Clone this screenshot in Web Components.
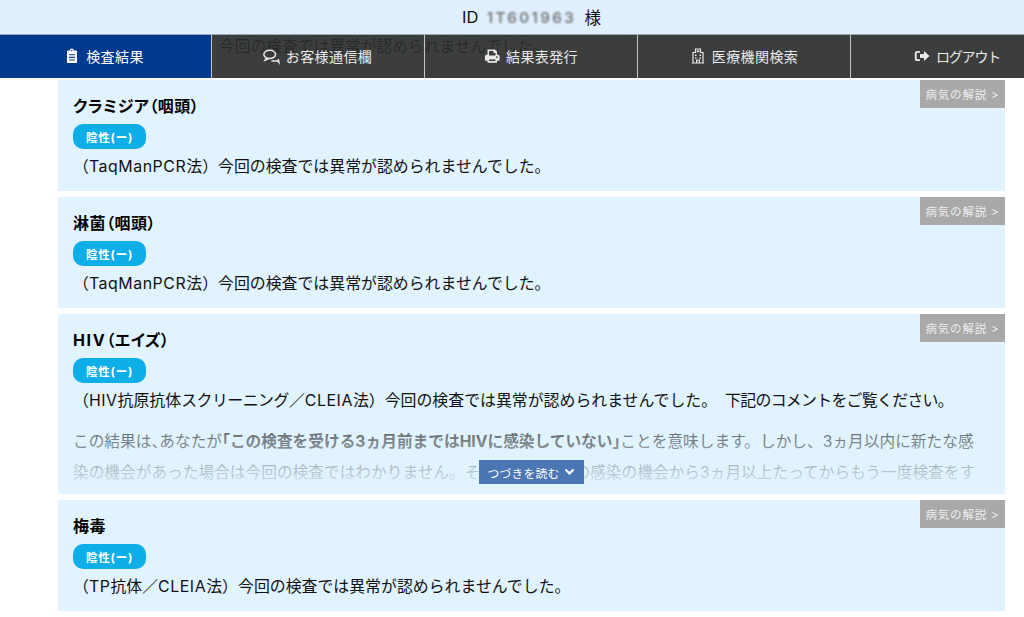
<!DOCTYPE html>
<html lang="ja">
<head>
<meta charset="utf-8">
<title>検査結果</title>
<style>
html, body { margin: 0; padding: 0; height: 617px; overflow: hidden; background: #fff; }
body { font-family: Inter, "Noto Sans CJK JP", sans-serif; color: #111; }
.tight { font-feature-settings: "halt"; }
.la { letter-spacing: .55px; }
.wide { letter-spacing: 1.6px; }
.kana { letter-spacing: -.5px; }
.note { letter-spacing: -.7px; }
</style>
</head>
<body>
<site-header user="1T601963"></site-header>
<result-list>
    <div slot="behind">今回の検査では異常が認められませんでした。</div>
    <result-card>
        <span slot="heading">クラミジア（咽頭）</span>
        <span slot="method">（<span class="la">TaqManPCR</span>法）今回の検査では異常が認められませんでした。</span>
    </result-card>
    <result-card>
        <span slot="heading">淋菌（咽頭）</span>
        <span slot="method">（<span class="la">TaqManPCR</span>法）今回の検査では異常が認められませんでした。</span>
    </result-card>
    <result-card>
        <span slot="heading"><span class="wide">HIV</span>（エイズ）</span>
        <span slot="method">（<span class="la">HIV</span>抗原抗体<span class="kana">スクリーニング</span>／<span class="la">CLEIA</span>法）今回の検査では異常が認められませんでした。&ensp;<span class="note">下記のコメントをご覧ください。</span></span>
        <read-more>この結果は<span class="tight">、</span>あなたが<b><span class="tight">「</span>この検査を受ける3ヵ月前まではHIVに感染していない<span class="tight">」</span></b>ことを意味します。しかし、3ヵ月以内に新たな感<br>染の機会があった場合は今回の検査ではわかりません。その場合は、その感染の機会から3ヵ月以上たってからもう一度検査をす</read-more>
    </result-card>
    <result-card>
        <span slot="heading">梅毒</span>
        <span slot="method">（<span class="la">TP</span>抗体／<span class="la">CLEIA</span>法）今回の検査では異常が認められませんでした。</span>
    </result-card>
</result-list>

<script>
'use strict'

const ICONS = {
    clipboard: '<path fill="currentColor" d="M4 2.500h1.800a2 2 0 0 1 4 0H12a1 1 0 0 1 1 1V14a1 1 0 0 1-1 1H4a1 1 0 0 1-1-1V3.500a1 1 0 0 1 1-1zm3.800-.8a.8.8 0 1 0 0 1.600.8.8 0 0 0 0-1.600zM5 6.200v1.100h6V6.200zm0 2.600v1.100h6V8.800zm0 2.600v1.100h6v-1.100z"/>',
    chat: '<g transform="translate(-1.500 0)" fill="none" stroke="currentColor" stroke-width="1.500"><ellipse cx="7.200" cy="6.400" rx="5.800" ry="4.100"/><path d="M3.800 10 2.600 12.200l3.400-1.400"/><path d="M9 13h6.200l1.200 1.400-.6-3.400"/></g>',
    print: '<path fill="currentColor" d="M3.500 1.500h7.500l2 2v3.200h1a1.800 1.800 0 0 1 1.600 1.800v3.600a.7.7 0 0 1-.7.700H13v2H3.500v-2H1.600a.7.7 0 0 1-.7-.7V8.500a1.800 1.800 0 0 1 1.600-1.800h1zm1.500 1.500v4.400h6.500V5H9.500V3zm0 8.500V13h6.500v-1.500zM12.800 8.200a.9.9 0 1 0 0 1.800.9.9 0 0 0 0-1.800z"/>',
    hospital: '<path fill="none" stroke="currentColor" stroke-width="1.200" d="M3 15V4.500h2.500V1h5v3.500H13V15zM1.800 15h12.400M6.600 15v-3h2.800v3"/><path fill="currentColor" d="M7.500 1.800h1v.9h.9v1h-.9v.9h-1v-.9h-.9v-1h.9zM5 6.500h1.500V8H5zm4.500 0H11V8H9.500zM5 9.200h1.500v1.500H5zm4.500 0H11v1.500H9.500z"/>',
    signout: '<path fill="currentColor" d="M6 3v1.800H3.700c-.6 0-1 .4-1 1v4.400c0 .6.4 1 1 1H6V13H3.400A2.600 2.600 0 0 1 .8 10.400V5.600A2.600 2.600 0 0 1 3.400 3zM10 2.900l5.500 5.100-5.500 5.100v-3H6V5.900h4z"/>'
};

class SiteHeader extends HTMLElement {

    constructor() {
        super();

        const shadow = this.attachShadow({mode: 'open'});
        const user = this.getAttribute('user');

        shadow.innerHTML = `
            <style>
            :host {
                display: block;
                position: absolute;
                top: 0;
                left: 0;
                width: 1024px;
                overflow: hidden;
                z-index: 10;
            }
            .id {
                height: 34px;
                box-sizing: border-box;
                padding-left: 39px;
                background-color: #e0f0fe;
                display: flex;
                align-items: center;
                justify-content: center;
                gap: 7px;
                font-size: 16.500px;
                color: #111;
            }
            .id span {
                color: #777;
                filter: blur(1.300px);
                width: 92px;
                font-size: 15px;
                letter-spacing: 2.400px;
                font-weight: 600;
                text-align: center;
                white-space: nowrap;
            }
            nav {
                display: flex;
                width: 1065px;
                height: 43px;
                border-top: 1px solid #9aa6b4;
            }
            </style>
            <div class="id">ID <span>${user}</span> 様</div>
            <nav>
                <nav-item icon="clipboard" active>検査結果</nav-item>
                <nav-item icon="chat">お客様通信欄</nav-item>
                <nav-item icon="print">結果表発行</nav-item>
                <nav-item icon="hospital">医療機関検索</nav-item>
                <nav-item icon="signout" narrow>ログアウト</nav-item>
            </nav>
        `;
    }
}

class NavItem extends HTMLElement {

    constructor() {
        super();

        const shadow = this.attachShadow({mode: 'open'});
        const icon = ICONS[this.getAttribute('icon')];

        shadow.innerHTML = `
            <style>
            :host {
                flex: 0 0 213px;
                box-sizing: border-box;
                display: flex;
                align-items: center;
                justify-content: center;
                gap: 6px;
                padding-bottom: 2px;
                color: #e8e8e8;
                background-color: rgba(43, 46, 46, .92);
                border-right: 1px solid #c4c6c6;
                font-size: 14px;
                letter-spacing: .4px;
            }
            :host([active]) {
                flex-basis: 212px;
                padding-right: 3px;
                background-color: #003a8e;
                color: #fff;
            }
            :host([narrow]) {
                letter-spacing: -1.200px;
            }
            svg {
                width: 16px;
                height: 16px;
                overflow: visible;
            }
            </style>
            <svg viewBox="0 0 16 16">${icon}</svg>
            <slot></slot>
        `;
    }
}

class ResultList extends HTMLElement {

    constructor() {
        super();

        const shadow = this.attachShadow({mode: 'open'});

        shadow.innerHTML = `
            <style>
            :host {
                display: block;
                padding: 34px 19px 0 58px;
            }
            .behind {
                height: 46px;
                box-sizing: border-box;
                padding: 2px 0 0 161px;
                font-size: 15.750px;
                line-height: 22px;
                color: #000;
                white-space: nowrap;
            }
            .cards {
                display: flex;
                flex-direction: column;
                gap: 6px;
            }
            </style>
            <div class="behind"><slot name="behind"></slot></div>
            <div class="cards"><slot></slot></div>
        `;
    }
}

class ResultCard extends HTMLElement {

    constructor() {
        super();

        const shadow = this.attachShadow({mode: 'open'});

        shadow.innerHTML = `
            <style>
            :host {
                display: block;
                position: relative;
                box-sizing: border-box;
                padding: 15px 15px 13px;
                background-color: #e0f3fe;
            }
            h2 {
                margin: 0;
                font-size: 16px;
                line-height: 22px;
                font-weight: 700;
                letter-spacing: .5px;
                font-feature-settings: "palt";
                color: #000;
            }
            .badge {
                display: flex;
                align-items: center;
                justify-content: center;
                width: 73px;
                height: 25px;
                margin-top: 7px;
                border-radius: 10px;
                background-color: #0eaee8;
                color: #fff;
                font-size: 11.500px;
                font-weight: 700;
                letter-spacing: .8px;
            }
            p {
                margin: 7px 0 0;
                font-size: 15.900px;
                line-height: 22px;
                color: #111;
                white-space: nowrap;
            }
            .about {
                position: absolute;
                top: 0;
                right: 0;
                width: 85px;
                height: 28px;
                display: flex;
                align-items: center;
                justify-content: center;
                background-color: #a9a9a9;
                color: #eee;
                font-size: 11.500px;
                letter-spacing: .8px;
            }
            </style>
            <h2><slot name="heading"></slot></h2>
            <div class="badge">陰性(ー)</div>
            <p><slot name="method"></slot></p>
            <slot></slot>
            <div class="about">病気の解説 &gt;</div>
        `;
    }
}

class ReadMore extends HTMLElement {

    constructor() {
        super();

        const shadow = this.attachShadow({mode: 'open'});

        shadow.innerHTML = `
            <style>
            :host {
                display: block;
                position: relative;
                height: 62px;
                margin: 14px 0 -7px;
            }
            .text {
                height: 62px;
                overflow: hidden;
                font-size: 15.700px;
                line-height: 31px;
                color: #222;
                white-space: nowrap;
            }
            .fade {
                position: absolute;
                inset: 0 -15px;
                background: linear-gradient(rgba(224, 243, 254, .3), rgba(224, 243, 254, .95));
            }
            .more {
                position: absolute;
                left: 406px;
                top: 34px;
                width: 105px;
                height: 24px;
                display: flex;
                align-items: center;
                justify-content: center;
                gap: 5px;
                background-color: #4a76b4;
                color: #fff;
                font-size: 11.800px;
                letter-spacing: .2px;
            }
            svg {
                width: 11px;
                height: 8px;
            }
            </style>
            <div class="text"><slot></slot></div>
            <div class="fade"></div>
            <div class="more">つづきを読む
                <svg viewBox="0 0 10 8"><path fill="none" stroke="#fff" stroke-width="2.200" d="M1 1.500 5 5.500 9 1.500"/></svg>
            </div>
        `;
    }
}

customElements.define('site-header', SiteHeader);
customElements.define('nav-item', NavItem);
customElements.define('result-list', ResultList);
customElements.define('result-card', ResultCard);
customElements.define('read-more', ReadMore);
</script>
</body>
</html>
